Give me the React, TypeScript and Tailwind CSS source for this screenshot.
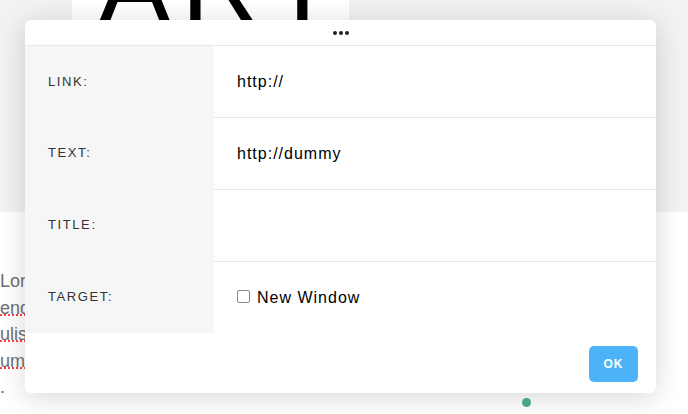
import React from 'react';

const rows = [
  { label: 'Link:', value: 'http://' },
  { label: 'Text:', value: 'http://dummy' },
  { label: 'Title:', value: '' },
];

const App: React.FC = () => {
  return (
    <div className="relative w-[688px] h-[414px] overflow-hidden bg-white font-['Liberation_Sans',Arial,sans-serif]">
      {/* Page behind the dialog */}
      <div className="h-[212px] bg-[#f2f2f2]">
        <div className="ml-[72px] w-[277px] h-[212px] bg-white overflow-hidden">
          <div className="mt-[-69px] ml-[26px] text-[110px] leading-[110px] tracking-[10px] text-black">ART</div>
        </div>
      </div>
      <div className="pt-[56px] w-[25px] overflow-hidden whitespace-nowrap text-[18px] leading-[26.5px] text-[#707070]">
        <p>Lorem</p>
        <p><span className="underline decoration-dotted decoration-red-500">endum</span></p>
        <p><span className="underline decoration-dotted decoration-red-500">ulis</span></p>
        <p><span className="underline decoration-dotted decoration-red-500">umst</span></p>
        <p>.</p>
      </div>
      <div className="absolute left-[522px] top-[398px] w-[9px] h-[9px] rounded-full bg-[#4caf8e]" />

      {/* Link dialog */}
      <div className="absolute left-[25px] top-[20px] w-[631px] h-[373px] bg-white rounded-[6px] shadow-[0_4px_28px_rgba(0,0,0,0.16)] overflow-hidden">
        <div className="h-[26px] flex items-center justify-center gap-[2px] border-b border-[#e8e8e8]">
          <span className="w-[4px] h-[4px] rounded-full bg-[#222]" />
          <span className="w-[4px] h-[4px] rounded-full bg-[#222]" />
          <span className="w-[4px] h-[4px] rounded-full bg-[#222]" />
        </div>
        {rows.map((r, i) => (
          <div key={r.label} className={`flex ${i === 0 ? 'h-[71px]' : 'h-[72px]'}`}>
            <div className="w-[189px] bg-[#f6f6f6] flex items-center pl-[23px] text-[13px] uppercase tracking-[1.6px] text-[#333]">
              {r.label}
            </div>
            <div className={`flex-1 flex items-center pl-[23px] text-[16px] tracking-[1px] text-black ${i === 0 ? '' : 'border-t border-[#e8e8e8]'}`}>
              {r.value}
            </div>
          </div>
        ))}
        <div className="flex h-[72px]">
          <div className="w-[189px] bg-[#f6f6f6] flex items-center pl-[23px] text-[13px] uppercase tracking-[1.6px] text-[#333]">
            Target:
          </div>
          <div className="flex-1 flex items-center pl-[23px] border-t border-[#e8e8e8]">
            <span className="w-[13px] h-[13px] rounded-[2px] border border-[#888] mr-[7px] mt-[-2px]" />
            <span className="text-[16px] tracking-[1px] text-black">New Window</span>
          </div>
        </div>
        <div className="flex justify-end pt-[13px] pr-[18px]">
          <button className="w-[49px] h-[36px] rounded-[5px] bg-[#4db3f8] text-white text-[12px] font-bold tracking-[1px]">
            OK
          </button>
        </div>
      </div>
    </div>
  );
};

export default App;
